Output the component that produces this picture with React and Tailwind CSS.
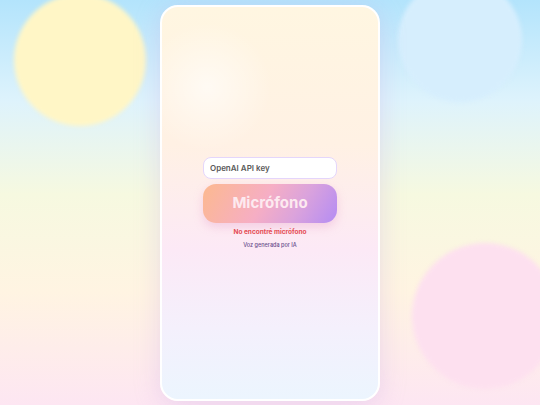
import React, { useState } from "react";

const App = () => {
    const [apiKey, setApiKey] = useState("");

    return (
        <div
            className="relative w-[540px] h-[405px] overflow-hidden bg-[linear-gradient(180deg,#b3e4fc_0%,#def3fc_25%,#f6f9e0_48%,#fff4e2_72%,#fde6f2_100%)]"
            style={{ fontFamily: "Inter, 'Noto Sans', sans-serif" }}
        >
            {/* Decorative blobs */}
            <div className="absolute left-[14px] top-[-6px] w-[132px] h-[132px] rounded-full bg-[#fff6c6] blur-[2px]" />
            <div className="absolute left-[398px] top-[-22px] w-[124px] h-[124px] rounded-full bg-[#d6eefd] blur-[2px]" />
            <div className="absolute left-[412px] top-[243px] w-[146px] h-[146px] rounded-full bg-[#fde0ef] blur-[2px]" />

            {/* Main card */}
            <div className="relative flex justify-center pt-[5px]">
                <div className="relative w-[220px] h-[396px] rounded-[18px] border-2 border-white overflow-hidden shadow-[0_4px_24px_rgba(200,170,230,0.35)] bg-[linear-gradient(180deg,#fff6e1_0%,#fff1e4_35%,#fce9f6_62%,#f4f0fc_82%,#ecf5fe_100%)]">
                    {/* soft glow */}
                    <div className="absolute left-[-20px] top-[15px] w-[130px] h-[130px] rounded-full bg-[radial-gradient(circle,rgba(255,255,255,0.6)_0%,rgba(255,255,255,0)_70%)]" />
                    <div className="relative h-full flex flex-col items-center justify-center">
                        <input
                            value={apiKey}
                            onChange={(e) => setApiKey(e.target.value)}
                            placeholder="OpenAI API key"
                            className="w-[134px] h-[22px] rounded-lg border border-[#e4d6fb] bg-white px-[6px] text-[8px] font-semibold text-[#555] placeholder:text-[#5a5a5a] outline-none"
                        />
                        <button className="mt-[5px] w-[134px] h-[39px] rounded-[13px] bg-[linear-gradient(120deg,#fcb98f_0%,#f6aec4_45%,#dba3dc_70%,#b48cf3_100%)] shadow-[0_4px_10px_rgba(230,150,200,0.35)] text-[15px] font-bold text-[#fdeaf0]">
                            Micrófono
                        </button>
                        <p className="mt-[5px] text-[6.5px] font-bold text-[#e54b52]">No encontré micrófono</p>
                        <p className="mt-[3px] text-[5.5px] font-medium text-[#6a4f8c]">Voz generada por IA</p>
                    </div>
                </div>
            </div>
        </div>
    );
};

export default App;
